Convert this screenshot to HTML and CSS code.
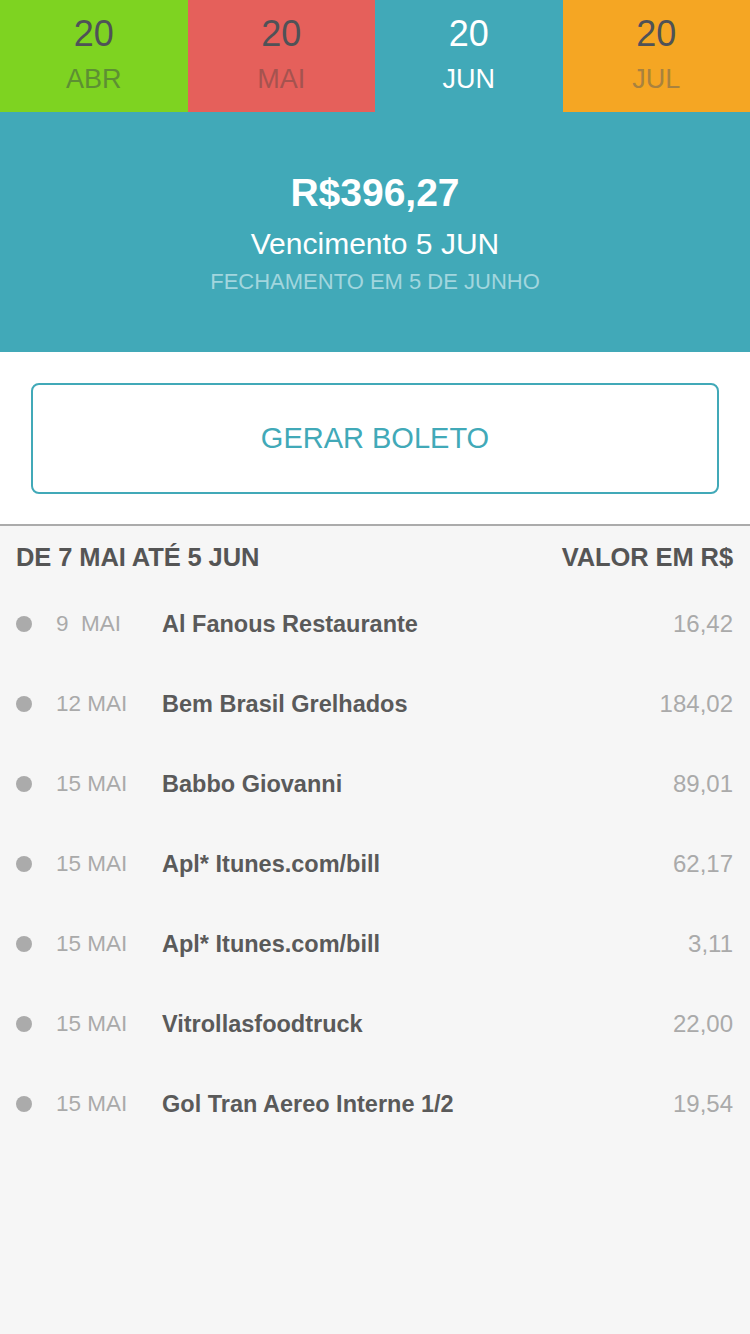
FILE: index.html
```html
<!DOCTYPE html>
<html lang="pt-BR">
<head>
<meta charset="utf-8">
<link rel="stylesheet" href="styles.css">
</head>
<body>
<div class="tabs">
  <div class="tab tab-abr"><span class="day">20</span><span class="mon">ABR</span></div>
  <div class="tab tab-mai"><span class="day">20</span><span class="mon">MAI</span></div>
  <div class="tab tab-jun"><span class="day">20</span><span class="mon">JUN</span></div>
  <div class="tab tab-jul"><span class="day">20</span><span class="mon">JUL</span></div>
</div>
<section class="summary">
  <div class="amount">R$396,27</div>
  <div class="due">Vencimento 5 JUN</div>
  <div class="closing">FECHAMENTO EM 5 DE JUNHO</div>
</section>
<section class="action">
  <button class="btn">GERAR BOLETO</button>
</section>
<section class="list">
  <div class="list-head"><span>DE 7 MAI ATÉ 5 JUN</span><span>VALOR EM R$</span></div>
  <div class="row"><span class="dot"></span><span class="date">9&nbsp;&nbsp;MAI</span><span class="name">Al Fanous Restaurante</span><span class="val">16,42</span></div>
  <div class="row"><span class="dot"></span><span class="date">12 MAI</span><span class="name">Bem Brasil Grelhados</span><span class="val">184,02</span></div>
  <div class="row"><span class="dot"></span><span class="date">15 MAI</span><span class="name">Babbo Giovanni</span><span class="val">89,01</span></div>
  <div class="row"><span class="dot"></span><span class="date">15 MAI</span><span class="name">Apl* Itunes.com/bill</span><span class="val">62,17</span></div>
  <div class="row"><span class="dot"></span><span class="date">15 MAI</span><span class="name">Apl* Itunes.com/bill</span><span class="val">3,11</span></div>
  <div class="row"><span class="dot"></span><span class="date">15 MAI</span><span class="name">Vitrollasfoodtruck</span><span class="val">22,00</span></div>
  <div class="row"><span class="dot"></span><span class="date">15 MAI</span><span class="name">Gol Tran Aereo Interne 1/2</span><span class="val">19,54</span></div>
</section>
</body>
</html>
```
FILE: styles.css
```css
* { box-sizing: border-box; }
html, body { margin: 0; padding: 0; }
body {
  width: 750px;
  min-height: 1334px;
  background: #f6f6f6;
  font-family: "Liberation Sans", Arial, sans-serif;
  color: #555;
}
.tabs { display: flex; height: 112px; }
.tab {
  flex: 1;
  display: flex;
  flex-direction: column;
  align-items: center;
  padding-top: 14px;
}
.day { font-size: 36px; line-height: 40px; color: #4f5257; }
.mon { font-size: 27px; line-height: 30px; margin-top: 10px; }
.tab-abr { background: #7ed321; }
.tab-abr .mon { color: #5d8f33; }
.tab-mai { background: #e5605b; }
.tab-mai .mon { color: #a5534f; }
.tab-jun { background: #41a9b8; }
.tab-jun .day, .tab-jun .mon { color: #fff; }
.tab-jul { background: #f5a623; }
.tab-jul .mon { color: #a9823e; }

.summary {
  background: #41a9b8;
  height: 240px;
  display: flex;
  flex-direction: column;
  align-items: center;
  padding-top: 59px;
  color: #fff;
}
.amount { font-size: 39px; font-weight: bold; line-height: 44px; }
.due { font-size: 30px; line-height: 34px; margin-top: 12px; }
.closing { font-size: 22px; line-height: 26px; margin-top: 8px; color: #a2d6de; }

.action {
  background: #fff;
  height: 174px;
  padding: 31px 31px 0;
  border-bottom: 2px solid #ababab;
}
.btn {
  display: block;
  width: 100%;
  height: 111px;
  background: #fff;
  border: 2px solid #41a9b8;
  border-radius: 8px;
  color: #41a9b8;
  font-family: "Liberation Sans", Arial, sans-serif;
  font-size: 29px;
  padding: 0;
}

.list { padding: 0 17px 0 16px; }
.list-head {
  display: flex;
  justify-content: space-between;
  height: 62px;
  align-items: center;
  font-size: 25.5px;
  font-weight: bold;
  color: #555;
  letter-spacing: -0.1px;
}
.row {
  display: flex;
  align-items: center;
  height: 80px;
  margin-top: -4px;
  margin-bottom: 4px;
}
.dot {
  width: 16px;
  height: 16px;
  border-radius: 50%;
  background: #ababab;
  margin-right: 24px;
}
.date { width: 106px; font-size: 22.5px; color: #aaa; }
.name { flex: 1; font-size: 23.5px; font-weight: bold; color: #5a5a5a; }
.val { font-size: 24px; color: #aaa; }
```
